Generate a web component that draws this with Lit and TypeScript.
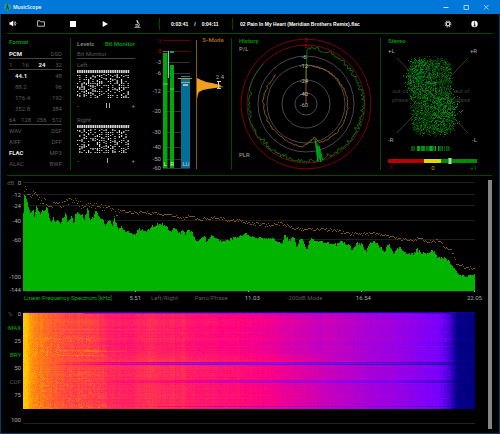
import { LitElement, html, svg, css } from "lit";
import { customElement, query } from "lit/decorators.js";
import { classMap } from "lit/directives/class-map.js";

type Pt = [number, number];

const seeded = (seed: number) => () => {
  seed = (seed * 1664525 + 1013904223) >>> 0;
  return seed / 4294967296;
};

const lerpAt = (pts: Pt[], x: number): number => {
  if (x <= pts[0][0]) return pts[0][1];
  for (let i = 1; i < pts.length; i++) {
    const [x1, y1] = pts[i];
    if (x <= x1) {
      const [x0, y0] = pts[i - 1];
      return y0 + ((y1 - y0) * (x - x0)) / (x1 - x0);
    }
  }
  return pts[pts.length - 1][1];
};

const toPoints = (flat: number[]): Pt[] => {
  const out: Pt[] = [];
  for (let i = 0; i < flat.length; i += 2) out.push([flat[i], flat[i + 1]]);
  return out;
};

/* ---------- bit monitor ---------- */
const bitPath = (seed: number): string => {
  const rnd = seeded(seed);
  let d = "";
  for (let c = 0; c < 24; c++) {
    const x = Math.round(c * 22) / 10;
    d += `M${x} 0h1.6v3h-1.6z`;
    const density = c < 2 ? 0.35 : 0.4 + rnd() * 0.25;
    for (let r = 0; r < 12; r++) {
      if (rnd() < density) d += `M${x} ${5 + r * 2}h1.2v1h-1.2z`;
      if (rnd() < density * 0.35) d += `M${x} ${4 + r * 2}h1.2v1h-1.2z`;
    }
  }
  return d;
};

/* ---------- loudness histogram ---------- */
const histogram = toPoints([
  197, 78, 199, 79, 201, 80, 204, 81, 206, 82, 212, 83, 216, 84, 221, 85, 220, 86, 224, 87,
  215, 88, 208, 89, 203, 90, 201, 91, 199, 92, 198, 94, 197, 99,
]).map((p) => p.join(",")).join(" ");

/* ---------- polar history ---------- */
const polar = (r: number, deg: number): string => {
  const a = (deg * Math.PI) / 180;
  return `${(306 + r * Math.sin(a)).toFixed(1)} ${(104 - r * Math.cos(a)).toFixed(1)}`;
};
const peakTrace = (): string => {
  const rnd = seeded(11);
  let d = `M306 84L307 50`;
  for (let a = 3; a < 314; a += 1.3) {
    let r = 58.5 - rnd() * rnd() * 5;
    if (a < 75) r = 58 - rnd() * 4;
    if (a > 285) r = 58.5;
    d += `L${polar(r, a)}`;
  }
  return d;
};
const ratioTrace = (): string => {
  const rnd = seeded(5);
  const base = toPoints([0, 38, 25, 39, 60, 40, 90, 42, 130, 42, 160, 41, 166, 34, 175, 38, 185, 43, 220, 41, 250, 42, 280, 43, 300, 42, 315, 42]);
  let d = "M306 104";
  for (let a = 0; a <= 315; a += 2) d += `L${polar(lerpAt(base, a) + (rnd() - 0.5) * 1.6, a)}`;
  return d;
};

/* ---------- stereo image ---------- */
const cloud = (seed: number, count: number, focus: number): string => {
  const rnd = seeded(seed);
  let d = "";
  for (let i = 0; i < count; i++) {
    const gx = (rnd() * 2 - 1) * (0.85 + rnd() * 0.25);
    const gy = (rnd() * 2 - 1) * (0.85 + rnd() * 0.2);
    if (Math.abs(gx) ** 4 + Math.abs(gy) ** 4 > 1.15) continue;
    const x = Math.round(431 + gx * 22 + Math.sign(gy) * Math.min(1, Math.abs(gy) * 3) * focus);
    const y = Math.round(96 + gy * 39);
    d += `M${x} ${y}h1v1h-1z`;
  }
  return d;
};
const cluster = (seed: number, count: number, cx: number, cy: number): string => {
  const rnd = seeded(seed);
  let d = "";
  for (let i = 0; i < count; i++) {
    const x = Math.round(cx + (rnd() + rnd() - 1) * 19);
    const y = Math.round(cy + (rnd() + rnd() - 1) * 23);
    d += `M${x} ${y}h1v1h-1z`;
  }
  return d;
};
const stripes = (() => {
  const rnd = seeded(21);
  const out: { x: number; o: number }[] = [];
  for (let x = 408; x < 451; x++) {
    const near = 1 - Math.abs(x - 427) / 40;
    out.push({ x, o: rnd() < 0.25 ? 0 : Math.min(1, near * (0.4 + rnd() * 0.8)) });
  }
  return out;
})();

/* ---------- spectrum ---------- */
const level = toPoints([
  23, 232, 24, 196, 25, 193, 27, 200, 29, 208, 31, 215, 33, 209, 35, 219, 36, 204, 38, 208, 40, 215, 43, 210, 45, 212, 47, 206,
  49, 215, 51, 222, 53, 217, 55, 223, 58, 220, 60, 224, 63, 219, 66, 213, 68, 223, 72, 216, 74, 224, 76, 213, 79, 212, 80, 217,
  82, 212, 84, 222, 86, 214, 88, 208, 90, 221, 94, 216, 96, 210, 99, 217, 102, 218, 106, 226, 108, 222, 110, 219, 113, 227,
  114, 218, 118, 228, 121, 226, 124, 231, 128, 231, 132, 233, 135, 236, 138, 229, 145, 231, 150, 230, 153, 226, 160, 223,
  167, 227, 171, 233, 174, 227, 180, 233, 183, 231, 185, 234, 188, 229, 192, 232, 195, 238, 198, 242, 201, 237, 205, 235,
  206, 242, 212, 235, 215, 238, 222, 241, 226, 241, 231, 239, 238, 237, 246, 233, 249, 236, 253, 236, 258, 238, 264, 239,
  272, 239, 278, 241, 282, 243, 285, 235, 290, 241, 294, 236, 297, 248, 300, 238, 304, 242, 307, 251, 310, 239, 315, 240,
  322, 242, 328, 243, 334, 245, 342, 242, 348, 244, 353, 250, 357, 243, 362, 244, 366, 252, 370, 243, 374, 241, 380, 247,
  385, 251, 389, 244, 393, 253, 400, 247, 407, 254, 414, 254, 417, 249, 422, 253, 430, 253, 434, 250, 438, 258, 445, 258,
  450, 262, 454, 268, 458, 274, 462, 276, 470, 276, 475, 275,
]);
const peaks = toPoints([
  23, 196, 25, 189, 30, 194, 36, 194, 40, 200, 50, 204, 60, 206, 65, 203, 70, 200, 78, 202, 84, 207, 95, 205, 108, 208,
  114, 213, 120, 210, 135, 212, 150, 213, 165, 214, 175, 216, 182, 219, 188, 216, 200, 219, 215, 217, 225, 219, 240, 220,
  249, 223, 260, 224, 270, 225, 282, 223, 290, 227, 305, 229, 320, 229, 335, 230, 348, 233, 360, 234, 375, 233, 390, 237,
  400, 239, 405, 238, 412, 241, 420, 237, 425, 241, 440, 240, 445, 247, 451, 249, 456, 263, 465, 267, 475, 268,
]);
const levelPath = (() => {
  const rnd = seeded(3);
  let d = "M23 291";
  for (let x = 23; x < 475; x++) {
    const y = Math.round(lerpAt(level, x + 0.5) + (rnd() - 0.5) * (x > 455 ? 2 : 3));
    d += `V${y}H${x + 1}`;
  }
  return d + "V291z";
})();
const peaksPath = (() => {
  const rnd = seeded(8);
  let d = "";
  for (let x = 24; x < 475; x++) {
    const spread = x < 120 ? 7 : 3;
    const y = Math.round(lerpAt(peaks, x) + (rnd() - 0.5) * spread);
    d += `M${x} ${y}h1v1h-1z`;
  }
  return d;
})();

/* ---------- spectrogram ---------- */
const ramp: [number, number, number, number][] = [
  [0, 0, 0, 128], [0.12, 48, 0, 190], [0.25, 120, 0, 255], [0.45, 190, 0, 196],
  [0.6, 255, 0, 128], [0.75, 255, 56, 76], [0.87, 255, 124, 20], [1, 255, 206, 0],
];
const colour = (v: number): number[] => {
  const t = Math.max(0, Math.min(1, v));
  for (let i = 1; i < ramp.length; i++) {
    if (t <= ramp[i][0]) {
      const a = ramp[i - 1];
      const b = ramp[i];
      const k = (t - a[0]) / (b[0] - a[0]);
      return [1, 2, 3].map((n) => a[n] + (b[n] - a[n]) * k);
    }
  }
  return [255, 206, 0];
};
const energy = toPoints([
  0, 1, 4, 0.98, 9, 0.89, 22, 0.84, 40, 0.78, 75, 0.75, 100, 0.71, 130, 0.72, 165, 0.68, 225, 0.62, 270, 0.54, 310, 0.46,
  350, 0.38, 390, 0.31, 415, 0.25, 425, 0.18, 431, 0.06, 440, 0.02, 452, 0,
]);

const spectrumAxis: [string, number][] = [
  ["0", 182], ["-12", 194], ["-24", 205], ["-40", 220], ["-60", 239], ["-100", 276], ["-144", 291],
];
const meterAxis: [string, number][] = [
  ["-3", 62], ["-6", 73], ["-12", 91], ["-20", 111], ["-30", 132], ["-40", 147], ["-50", 159], ["-60", 168],
];
const rings: [string, number, number][] = [
  ["3", 65, 40], ["0", 59, 46], ["-6", 48, 57], ["-12", 39, 66], ["-24", 24, 81], ["-40", 11, 94],
];

interface FormatRow { cells: string[]; on?: number; line?: boolean; inset?: boolean }
const formats: FormatRow[] = [
  { cells: ["PCM", "DSD"], on: 0, line: true },
  { cells: ["1", "16", "24", "32"], on: 2, line: true },
  { cells: ["44.1", "48"], on: 0, inset: true },
  { cells: ["88.2", "96"], inset: true },
  { cells: ["176.4", "192"], inset: true },
  { cells: ["352.8", "384"], inset: true },
  { cells: ["64", "128", "256", "512"], line: true },
  { cells: ["WAV", "DSF"] },
  { cells: ["AIFF", "DFF"] },
  { cells: ["FLAC", "MP3"], on: 0 },
  { cells: ["ALAC", "BWF"] },
];

@customElement("app-root")
export class AppRoot extends LitElement {
  @query(".spectrogram") private canvas!: HTMLCanvasElement;

  static styles = css`
    :host {
      --line: #004a00;
      --dim: #5a5a5a;
      display: flex;
      flex-direction: column;
      box-sizing: border-box;
      min-height: 100vh;
      background: #000;
      color: #ccc;
      font: 6px/8px Roboto, "Liberation Sans", sans-serif;
      border: solid #003c6c;
      border-width: 0 1px 1px;
    }
    button {
      all: unset;
      cursor: pointer;
      white-space: nowrap;
    }
    svg { display: block; }
    text { font: 6px Roboto, "Liberation Sans", sans-serif; fill: #aaa; }
    .bold, .on { font-weight: bold; }
    .end { text-anchor: end; }
    .mid { text-anchor: middle; }

    .titlebar {
      display: flex;
      align-items: center;
      height: 14px;
      margin: 0 -1px;
      padding: 0 4px;
      background: #0078d7;
      color: #fff;
    }
    .titlebar h1 {
      flex: 1;
      margin: 0 0 0 2px;
      font: 5px/8px "Open Sans", "Noto Sans", sans-serif;
      font-weight: 600;
    }
    .window { display: flex; }
    .window button { width: 20px; display: flex; justify-content: center; }

    .toolbar {
      display: flex;
      align-items: center;
      height: 19px;
      color: #eee;
    }
    .toolbar button { display: flex; justify-content: center; width: 32px; }
    .toolbar .volume { width: 24px; }
    .toolbar .small { width: 26px; }
    .toolbar .time,
    .toolbar .track {
      font: bold 5px/8px "Liberation Sans", Arial, sans-serif;
      color: #fff;
      white-space: pre;
    }
    .divider { width: 1px; height: 12px; background: var(--line); }
    .divider.first { margin: 0 11px 0 6px; }
    .divider.second { margin: 0 7px 0 0; }
    .time { display: flex; flex: 0 0 61px; gap: 6px; }
    .track { flex: 1; overflow: hidden; }
    .toolbar .last { margin-right: 12px; }

    .rule { height: 1px; margin: 0 7px 0 6px; background: var(--line); }

    .panels {
      display: grid;
      grid-template-columns: 63fr 68fr 93fr 149fr 112fr;
      margin: 4px 6px 5px 7px;
    }
    .panels > section { min-width: 0; }
    .panels svg.scope { width: 100%; overflow: visible; }
    .edge { border-right: 1px solid var(--line); }
    h2 {
      margin: 0;
      height: 10px;
      font-size: 6px;
      font-weight: bold;
      line-height: 7px;
      color: #009400;
    }
    .format { padding: 0 8px 0 1px; }
    .row {
      display: flex;
      justify-content: space-between;
      box-sizing: border-box;
      height: 11px;
      line-height: 11px;
      color: var(--dim);
    }
    .row.line { border-bottom: 1px solid #444; }
    .row.inset { padding-left: 6px; }
    .row .on { color: #eee; }

    .levels { padding: 0 4px 0 6px; }
    .tabs {
      display: flex;
      justify-content: space-between;
      height: 10px;
      line-height: 7px;
      font-weight: 500;
      color: #888;
    }
    .tabs .on { color: #009400; }
    .bits { height: 28px; width: 53px; }
    .balance {
      display: flex;
      justify-content: space-between;
      align-items: center;
      height: 16px;
      color: #999;
    }
    .needle { margin-left: 4px; }

    .lower { display: flex; padding: 4px 7px 4px 0; flex: 1; }
    .charts {
      flex: 1;
      display: grid;
      grid-template-columns: 22px 1fr;
      align-content: start;
      margin-right: 13px;
    }
    .plot { width: 100%; height: 112px; }
    .modes {
      grid-column: 2;
      display: grid;
      grid-template-columns: repeat(4, 1fr);
      height: 10px;
      line-height: 10px;
      margin-bottom: 8px;
      color: var(--dim);
    }
    .modes > div { display: flex; gap: 17px; padding-left: 1px; }
    .modes .two { padding-left: 17px; }
    .modes .three { padding-left: 34px; }
    .modes .on { color: #00b400; font-weight: normal; }
    .modes span {
      margin: 0 -7px 0 auto;
      line-height: 12px;
      color: #aaa;
    }
    .scale {
      display: flex;
      flex-direction: column;
      justify-content: space-between;
      height: 89px;
      padding-right: 2px;
      text-align: right;
      color: #aaa;
    }
    .scale .top { display: flex; justify-content: space-between; padding-left: 7px; }
    .dim { color: var(--dim); }
    .green { color: #00b400; }
    .spectrogram {
      display: block;
      width: 100%;
      height: 97px;
      margin: 2px 0 13px;
      image-rendering: pixelated;
    }
    .base { border-bottom: 1px solid #222; }
    .hundred { padding: 17px 2px 0 0; text-align: right; color: #aaa; }
    .scroll { width: 4px; background: #858585; }
  `;

  protected firstUpdated(): void {
    const w = 452;
    const h = 97;
    const ctx = this.canvas.getContext("2d");
    if (!ctx) return;
    const image = ctx.createImageData(w, h);
    const rnd = seeded(42);
    const cols = Array.from({ length: w }, () => (rnd() - 0.5) * 0.03);
    for (const c of [126, 148, 159]) {
      for (let k = 0; k < 4; k++) cols[c + k] += 0.025;
    }
    const ease = (x: number, from: number, span: number) => Math.min(1, Math.max(0, (x - from) / span));
    for (let y = 0; y < h; y++) {
      const row = (rnd() - 0.5) * 0.055;
      const dash = (y > 22 && y < 45) || y > 56;
      for (let x = 0; x < w; x++) {
        let v = lerpAt(energy, x) + cols[x] + row * Math.min(1, x / 60) + (rnd() - 0.5) * 0.05;
        if (y < 42 && x > 75 && x < 300) v -= 0.03;
        if (x > 80 && x < 112) v -= 0.02;
        if (x > 10 && x < 84 && dash && rnd() < 0.1) v += 0.08;
        if (y > 37 && y < 45 && x > 34 && x < 84 && y % 5 === 3) v += 0.08;
        if (y === 17 && x > 40 && x < 150) v += 0.05;
        if (y === 39 && x > 60 && x < 104) v += 0.08;
        const reach = ease(x, 30, 150);
        if (y === 50 || y === 52) v *= 1 - 0.58 * reach;
        if (y === 51) v *= 1 - 0.25 * reach;
        if (y > 67 && y < 71) v *= 1 - (0.15 + rnd() * 0.25) * ease(x, 70, 180);
        if (y === 94) v *= 1 - 0.4 * ease(x, 90, 150);
        if (y === 0) v = 0.05 + rnd() * 0.08;
        if (y === 1 && x > 60) v *= 0.75;
        if (x > 432) v = Math.max(0, v * 0.4);
        const [r, g, b] = colour(v);
        const i = (y * w + x) * 4;
        image.data[i] = r;
        image.data[i + 1] = g;
        image.data[i + 2] = b;
        image.data[i + 3] = 255;
      }
    }
    ctx.putImageData(image, 0, 0);
  }

  private titlebar() {
    return html`<header class="titlebar">
      <svg width="7" height="8" viewBox="0 0 7 8"><circle cx="3.5" cy="4" r="3.4" fill="#2a9c94" /><path d="M3.6 1.2v2.2L2.3 6.6M3.6 3.4l1.2 3.2M2 3.6l1.5-1" stroke="#06352f" stroke-width=".9" fill="none" /></svg>
      <h1>MusicScope</h1>
      <div class="window">
        <button aria-label="Minimize"><svg width="6" height="6"><path d="M0.5 3.5h5" stroke="#cfe6fa" /></svg></button>
        <button aria-label="Maximize"><svg width="6" height="6"><path d="M1 1.5h4.5v4H1z" stroke="#cfe6fa" stroke-width=".8" fill="none" /></svg></button>
        <button aria-label="Close"><svg width="6" height="6"><path d="M1 1l4.5 4.5M5.5 1L1 5.5" stroke="#cfe6fa" stroke-width=".8" /></svg></button>
      </div>
    </header>`;
  }

  private toolbar() {
    return html`<nav class="toolbar">
      <button class="volume" aria-label="Volume"><svg width="8" height="7" viewBox="0 0 8 7"><path d="M.5 2.2h1.3L4.2.4v6.2L1.8 4.8H.5z" fill="#fff" /><path d="M5 2q1 1.5 0 3M6 1.2q1.9 2.3 0 4.6" stroke="#ddd" stroke-width=".8" fill="none" /></svg></button>
      <button aria-label="Open"><svg width="8" height="7" viewBox="0 0 8 7"><path d="M.6 6.2V.8h2.5l.8 1h3.5v4.4z" stroke="#ccc" stroke-width=".9" fill="none" /></svg></button>
      <button aria-label="Stop"><svg width="6" height="6"><rect width="6" height="6" fill="#fff" /></svg></button>
      <button aria-label="Play"><svg width="6" height="6"><path d="M.7 0L5.8 3 .7 6z" fill="#fff" /></svg></button>
      <button aria-label="Analyze"><svg width="7" height="8" viewBox="0 0 7 8"><path d="M2.8 .3l1.3 3" stroke="#ddd" stroke-width="1.3" /><path d="M4.2 2.6q2.2 1.6.5 3.7M1.2 4.6h3M.5 7.3h6M1.5 6.1h3.5" stroke="#ddd" stroke-width=".8" fill="none" /></svg></button>
      <i class="divider first"></i>
      <div class="time"><span>0:03:41</span><span>/</span><span>0:04:11</span></div>
      <i class="divider second"></i>
      <div class="track">02 Pain In My Heart (Meridian Brothers Remix).flac</div>
      <button class="small" aria-label="Settings"><svg width="8" height="8" viewBox="0 0 8 8"><circle cx="4" cy="4" r="2.9" fill="none" stroke="#bbb" stroke-width="1.1" stroke-dasharray="1.4 .88" /><circle cx="4" cy="4" r="1.8" fill="none" stroke="#ddd" stroke-width="1.1" /></svg></button>
      <button class="small last" aria-label="About"><svg width="7" height="8" viewBox="0 0 7 8"><circle cx="3.5" cy="4" r="3.2" fill="#fff" /><path d="M3.5 1.6v1.1M2.8 3.7h.9v2.2M2.6 5.9h2" stroke="#000" stroke-width=".9" fill="none" /></svg></button>
    </nav>`;
  }

  private channel(name: string, seed: number, needles: number[]) {
    return html`<div class="row">${name}</div>
      <svg class="bits" viewBox="0 0 53 28"><path d=${bitPath(seed)} fill="#d8d8d8" /></svg>
      <div class="balance"><span>-</span>
        <svg class="needle" width="5" height="6">${needles.map((x) => svg`<rect x=${x} y="0" width="1" height="5" fill="#aaa" />`)}</svg>
      <span>+</span></div>`;
  }

  private meter() {
    return html`<svg class="scope" viewBox="139 38 92 132" role="img" aria-label="Level meters">
      <path d="M163 40.5h27M163 51.5h27" stroke="#600000" />
      ${meterAxis.map(([t, y]) => svg`<path d=${`M163 ${y + 0.5}h27`} stroke="#333" /><text class="end" x="161" y=${y + 2}>${t}</text>`)}
      <text class="end" x="161" y="43" style="fill:#900">3</text>
      <text class="end" x="161" y="53" style="fill:#c00">0</text>
      <rect x="163" y="53" width="4.5" height="115" fill="#00a80c" />
      <rect x="163" y="51" width="4.5" height="1" fill="#c04040" />
      <rect x="163" y="83" width="4.5" height="2" fill="#00d820" />
      <rect x="170" y="65" width="4" height="103" fill="#00a80c" />
      <rect x="170" y="51" width="4" height="2" fill="#00a860" />
      <rect x="170" y="88" width="4" height="2" fill="#00d820" />
      <rect x="168" y="51" width="1" height="27" fill="#6cc8e8" />
      <rect x="181" y="78" width="9" height="90" fill="#007099" />
      <rect x="181" y="76" width="9" height="1" fill="#0088b8" />
      <rect x="178" y="78" width="14" height="1" fill="#d08c20" />
      <rect x="181" y="82" width="9" height="1" fill="#c0a050" />
      <rect x="183" y="84" width="5" height="2" fill="#8cc0d8" />
      <text class="mid" x="165" y="166" style="fill:#cfc">L</text>
      <text class="mid" x="172" y="166" style="fill:#cfc">R</text>
      <text class="mid" x="186" y="166" style="fill:#ccc">LU</text>
      <rect x="196" y="40" width="1" height="129" fill="#8a5a10" />
      <polygon points=${histogram} fill="#f0a020" />
      <path d="M217 81.5h4M217 88.5h4M218.5 82v6" stroke="#ccc" fill="none" />
      <text class="mid" x="220" y="79">2.4</text>
      <text class="mid bold" x="213" y="42" style="fill:#a06410">S-Mode</text>
    </svg>`;
  }

  private history() {
    return html`<svg class="scope" viewBox="232 38 148 132" role="img" aria-label="History">
      ${rings.map(([, r], i) => svg`<circle cx="306" cy="104" r=${r} fill="none" stroke=${i < 2 ? "#800008" : "#484848"} />`)}
      <path d=${peakTrace()} stroke="#008c14" stroke-width=".8" fill="none" />
      <path d="M314.5 138l3 23 1.5-3 1 4 2-5-3-11-3-5z" fill="#00a018" opacity=".75" />
      <path d="M315 139l3 23-1-16 4 16-2-16 4 14" stroke="#00b020" stroke-width=".8" fill="none" />
      <path d=${ratioTrace()} stroke="#98641c" stroke-width=".9" fill="none" />
      ${rings.map(([t, , y], i) => svg`<text class="mid" x=${i < 2 ? 306 : 304} y=${y + 2} style=${i < 2 ? "fill:#b00" : "fill:#bbb"}>${t}</text>`)}
      <text class="mid" x="304" y="107">-60</text>
      <text class="bold" x="239" y="43" style="fill:#009400">History</text>
      <text x="239" y="51">P/L</text>
      <text x="239" y="157">PLR</text>
    </svg>`;
  }

  private stereo() {
    return html`<svg class="scope" viewBox="381 38 112 132" role="img" aria-label="Stereo image">
      <path d="M397 58l71 75M468 58l-71 75" stroke="#383838" />
      <text class="mid" x="400" y="93" style="fill:#3c3c3c">out of</text>
      <text class="mid" x="400" y="102" style="fill:#3c3c3c">phase</text>
      <text class="mid" x="462" y="93" style="fill:#3c3c3c">out of</text>
      <text class="mid" x="462" y="102" style="fill:#3c3c3c">phase</text>
      <path d=${cloud(7, 2100, 1)} fill="#003c00" />
      <path d=${cloud(99, 800, 2)} fill="#006008" />
      <path d=${cluster(13, 240, 420, 77)} fill="#007c10" />
      <path d=${cluster(57, 240, 444, 110)} fill="#007c10" />
      <path d=${cloud(31, 200, 3)} fill="#009414" />
      ${stripes.map((s) => svg`<rect x=${s.x} y="146" width="1" height="5" fill="#00c818" opacity=${s.o.toFixed(2)} />`)}
      <rect x="388" y="159" width="36" height="4" fill="#b80000" />
      <rect x="424" y="159" width="17" height="4" fill="#e0d800" />
      <rect x="441" y="159" width="36" height="4" fill="#008c00" />
      <rect x="448" y="158" width="4" height="6" fill="#50a850" />
      <rect x="449" y="158" width="2" height="6" fill="#b0d8b0" />
      <text class="bold" x="388" y="43" style="fill:#009400">Stereo</text>
      <text x="388" y="53">+L</text>
      <text class="end" x="477" y="53">+R</text>
      <text x="388" y="142">-R</text>
      <text class="end" x="477" y="142">-L</text>
      <text x="388" y="170" style="fill:#a00">-1</text>
      <text class="mid" x="433" y="170" style="fill:#b8b000">0</text>
      <text class="end" x="477" y="170" style="fill:#008400">+1</text>
    </svg>`;
  }

  render() {
    return html`
      ${this.titlebar()} ${this.toolbar()}
      <div class="rule"></div>
      <main class="panels">
        <section class="format edge">
          <h2>Format</h2>
          ${formats.map(
            (f) => html`<div class=${classMap({ row: true, line: !!f.line, inset: !!f.inset })}>
              ${f.cells.map((c, i) => html`<span class=${classMap({ on: f.on === i })}>${c}</span>`)}
            </div>`
          )}
        </section>
        <section class="levels">
          <div class="tabs"><button>Levels</button><button class="on">Bit Monitor</button></div>
          <div class="row line">Bit Monitor</div>
          ${this.channel("Left", 17, [1, 4])} ${this.channel("Right", 71, [2])}
        </section>
        <section class="edge">${this.meter()}</section>
        <section class="edge">${this.history()}</section>
        <section>${this.stereo()}</section>
      </main>
      <div class="rule"></div>
      <div class="lower">
        <div class="charts">
          <svg width="22" height="112" viewBox="1 180 22 112">
            <text x="7" y="185" style="fill:#5a5a5a">dB</text>
            ${spectrumAxis.map(([t, y]) => svg`<text class="end" x="21" y=${Math.min(y + 3, 292)}>${t}</text>`)}
          </svg>
          <svg class="plot" viewBox="23 180 452 112" preserveAspectRatio="none" role="img" aria-label="Frequency spectrum">
            ${spectrumAxis.map(([, y]) => svg`<rect x="23" y=${y} width="452" height="1" fill="#1e1e1e" />`)}
            <path d=${levelPath} fill="#00b400" />
            <path d=${peaksPath} fill="#80540c" />
            <path d="M135.5 291v1M248.5 291v1M361.5 291v1M474.5 291v1" stroke="#aaa" />
          </svg>
          <div class="modes">
            <div><button class="on">Linear Frequency Spectrum [kHz]</button><span>5.51</span></div>
            <div class="two"><button>Left/Right</button><button>Pano/Phase</button><span>11.03</span></div>
            <div class="three"><button>-200dB Mode</button><span>16.54</span></div>
            <div><span>22.05</span></div>
          </div>
          <div>
            <div class="scale">
              <div class="top"><span class="dim">%</span><span>0</span></div>
              <button class="green">MAX</button>
              <span>25</span>
              <button class="green">BRY</button>
              <span>50</span>
              <button class="dim">COF</button>
              <span>75</span>
            </div>
            <div class="hundred">100</div>
          </div>
          <div class="base"><canvas class="spectrogram" width="452" height="97"></canvas></div>
        </div>
        <div class="scroll" role="scrollbar" aria-label="Chart scroll"></div>
      </div>
    `;
  }
}
